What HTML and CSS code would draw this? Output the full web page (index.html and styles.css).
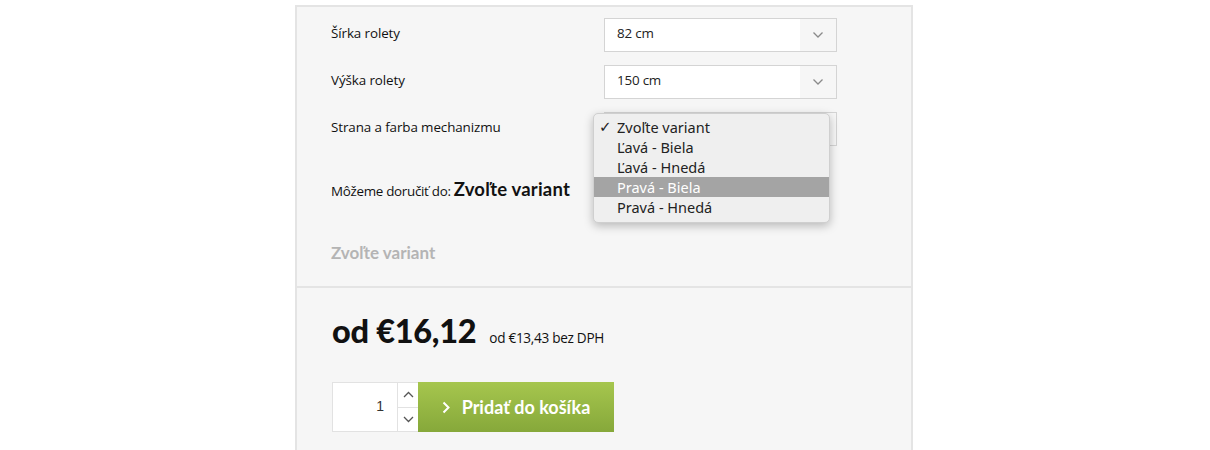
FILE: index.html
```html
<!DOCTYPE html>
<html lang="sk">
<head>
    <meta charset="UTF-8">
    <title>Roleta - varianty</title>
    <link rel="stylesheet" href="styles.css">
</head>
<body>
    <div class="panel">
        <!-- Variant options -->
        <div class="options">
            <div class="field">
                <label class="field-label">Šírka rolety</label>
                <div class="select">
                    <span class="select-value">82 cm</span>
                    <span class="select-arrow">
                        <svg width="12" height="8" viewBox="0 0 12 8"><path d="M1.5 1.5 6 6l4.5-4.5" fill="none" stroke="#8a8a8a" stroke-width="1.3"/></svg>
                    </span>
                </div>
            </div>
            <div class="field">
                <label class="field-label">Výška rolety</label>
                <div class="select">
                    <span class="select-value">150 cm</span>
                    <span class="select-arrow">
                        <svg width="12" height="8" viewBox="0 0 12 8"><path d="M1.5 1.5 6 6l4.5-4.5" fill="none" stroke="#8a8a8a" stroke-width="1.3"/></svg>
                    </span>
                </div>
            </div>
            <div class="field">
                <label class="field-label">Strana a farba mechanizmu</label>
                <div class="select select-open">
                    <span class="select-value">Zvoľte variant</span>
                    <span class="select-arrow">
                        <svg width="12" height="8" viewBox="0 0 12 8"><path d="M1.5 1.5 6 6l4.5-4.5" fill="none" stroke="#8a8a8a" stroke-width="1.3"/></svg>
                    </span>
                    <!-- Open native menu -->
                    <ul class="menu">
                        <li class="menu-item checked">Zvoľte variant</li>
                        <li class="menu-item">Ľavá - Biela</li>
                        <li class="menu-item">Ľavá - Hnedá</li>
                        <li class="menu-item active">Pravá - Biela</li>
                        <li class="menu-item">Pravá - Hnedá</li>
                    </ul>
                </div>
            </div>

            <p class="delivery">Môžeme doručiť do: <strong>Zvoľte variant</strong></p>
            <p class="availability">Zvoľte variant</p>
        </div>

        <!-- Price and cart -->
        <div class="buy">
            <div class="price">
                <span class="price-main">od €16,12</span>
                <span class="price-net">od €13,43 bez DPH</span>
            </div>
            <div class="cart">
                <div class="qty">
                    <span class="qty-value">1</span>
                    <div class="qty-spin">
                        <span class="qty-btn">
                            <svg width="11" height="7" viewBox="0 0 11 7"><path d="M1 6 5.5 1.5 10 6" fill="none" stroke="#555" stroke-width="1.3"/></svg>
                        </span>
                        <span class="qty-btn">
                            <svg width="11" height="7" viewBox="0 0 11 7"><path d="M1 1 5.5 5.5 10 1" fill="none" stroke="#555" stroke-width="1.3"/></svg>
                        </span>
                    </div>
                </div>
                <button class="add-btn">
                    <svg width="8" height="13" viewBox="0 0 8 13"><path d="M1.5 1.5 6.5 6.5l-5 5" fill="none" stroke="#fff" stroke-width="2"/></svg>
                    Pridať do košíka
                </button>
            </div>
        </div>
    </div>
</body>
</html>
```

FILE: styles.css
```css
:root {
    --panel-bg: #f6f6f6;
    --panel-border: #e4e4e4;
    --input-border: #d4d4d4;
    --text: #111111;
    --muted: #b4b4b4;
}

* {
    margin: 0;
    padding: 0;
    box-sizing: border-box;
}

body {
    background: #ffffff;
    font-family: 'Open Sans', sans-serif;
    color: var(--text);
    overflow: hidden;
}

.panel {
    width: 618px;
    margin: 5px 0 0 295px;
    height: 460px;
    background: var(--panel-bg);
    border: 2px solid var(--panel-border);
    border-bottom: none;
}

/* Variant options */
.options {
    padding: 11px 34px 0;
    height: 281px;
    border-bottom: 2px solid var(--panel-border);
}

.field {
    display: flex;
    height: 34px;
    margin-bottom: 13px;
}

.field-label {
    width: 273px;
    padding-top: 6px;
    font-size: 13.4px;
    letter-spacing: -0.1px;
}

.select {
    position: relative;
    display: flex;
    width: 233px;
    height: 34px;
    background: #ffffff;
    border: 1px solid var(--input-border);
}

.select-value {
    flex: 1;
    padding: 5px 0 0 12px;
    font-size: 13.4px;
    letter-spacing: -0.2px;
    color: #222;
}

.select-open .select-value {
    visibility: hidden;
}

.select-arrow {
    width: 36px;
    display: flex;
    align-items: center;
    justify-content: center;
    background: var(--panel-bg);
}

/* Open dropdown */
.menu {
    position: absolute;
    left: -12px;
    top: 0;
    width: 237px;
    padding: 3px 0 5px;
    list-style: none;
    background: #efefef;
    border: 1px solid #cfcfcf;
    border-radius: 5px;
    box-shadow: 0 3px 10px rgba(0, 0, 0, 0.25);
    font-family: 'Noto Sans', sans-serif;
    font-size: 14.5px;
    color: #222;
}

.menu-item {
    height: 20px;
    line-height: 20px;
    padding-left: 23px;
    position: relative;
}

.menu-item.checked::before {
    content: '✓';
    position: absolute;
    left: 5px;
    font-family: 'DejaVu Sans', sans-serif;
    font-size: 15px;
    font-weight: 700;
}

.menu-item.active {
    background: #a4a4a4;
    color: #ffffff;
}

.delivery {
    margin-top: 32px;
    font-size: 13.4px;
    letter-spacing: -0.3px;
}

.delivery strong {
    font-family: 'Lato', sans-serif;
    font-size: 18.5px;
    font-weight: 700;
    letter-spacing: 0.2px;
}

.availability {
    margin-top: 42px;
    font-family: 'Lato', sans-serif;
    font-size: 17px;
    font-weight: 700;
    color: var(--muted);
}

/* Price and cart */
.buy {
    padding: 23px 34px 0 35px;
}

.price {
    display: flex;
    align-items: baseline;
    gap: 13px;
}

.price-main {
    font-family: 'Lato', sans-serif;
    font-size: 32.5px;
    font-weight: 900;
    letter-spacing: -0.3px;
}

.price-net {
    font-size: 13.6px;
    letter-spacing: -0.3px;
}

.cart {
    display: flex;
    margin-top: 32px;
    height: 50px;
}

.qty {
    display: flex;
    background: #ffffff;
    border: 1px solid #e2e2e2;
    border-right: none;
}

.qty-value {
    width: 64px;
    padding: 15px 13px 0 0;
    text-align: right;
    font-family: 'Liberation Sans', sans-serif;
    font-size: 14px;
    color: #333;
}

.qty-spin {
    width: 21px;
    display: flex;
    flex-direction: column;
    border-left: 1px solid #e2e2e2;
}

.qty-btn {
    flex: 1;
    display: flex;
    align-items: center;
    justify-content: center;
}

.qty-btn + .qty-btn {
    border-top: 1px solid #e2e2e2;
}

.add-btn {
    width: 196px;
    display: flex;
    align-items: center;
    justify-content: center;
    gap: 12px;
    border: none;
    background: linear-gradient(#a6c64e, #86a83a);
    color: #ffffff;
    font-family: 'Lato', sans-serif;
    font-size: 18px;
    font-weight: 700;
}
```
